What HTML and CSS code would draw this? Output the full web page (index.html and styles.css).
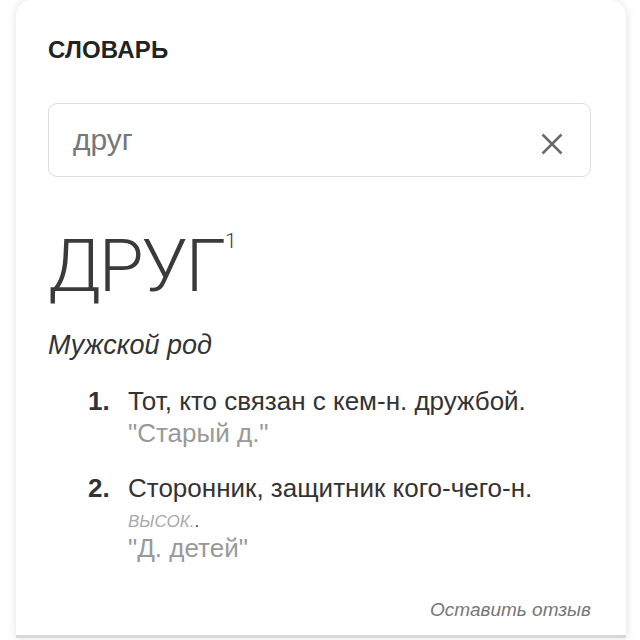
FILE: index.html
```html
<!DOCTYPE html>
<html lang="ru">
<head>
<meta charset="utf-8">
<link rel="stylesheet" href="styles.css">
</head>
<body>
<div class="card">
  <h2 class="title">СЛОВАРЬ</h2>
  <div class="search">
    <span class="query">друг</span>
    <svg class="clear" width="22" height="22" viewBox="0 0 22 22"><path d="M1.5 1.5 L20.5 20.5 M20.5 1.5 L1.5 20.5" stroke="#6b6b6b" stroke-width="2.5" fill="none"/></svg>
  </div>
  <div class="word">ДРУГ<sup class="hom">1</sup></div>
  <div class="pos">Мужской род</div>
  <ol class="defs">
    <li class="def">
      <span class="num">1.</span>
      <div class="body">
        <div class="text">Тот, кто связан с кем-н. дружбой.</div>
        <div class="ex">"Старый д."</div>
      </div>
    </li>
    <li class="def">
      <span class="num">2.</span>
      <div class="body">
        <div class="text">Сторонник, защитник кого-чего-н.</div>
        <div class="label"><span class="lbl">высок.</span>.</div>
        <div class="ex">"Д. детей"</div>
      </div>
    </li>
  </ol>
  <div class="feedback">Оставить отзыв</div>
</div>
</body>
</html>
```

FILE: styles.css
```css
html, body {
  margin: 0;
  padding: 0;
  background: #ffffff;
}
body {
  font-family: "Liberation Sans", Arial, sans-serif;
  width: 640px;
  height: 640px;
  overflow: hidden;
}
.card {
  margin: 0 14px 0 16px;
  height: 638px;
  background: #fff;
  border-radius: 16px 16px 0 0;
  box-shadow: 0 0 10px rgba(0,0,0,0.12);
  border-bottom: 3px solid #d8d8d8;
  padding: 0 35px 0 32px;
  box-sizing: border-box;
  display: flex;
  flex-direction: column;
}
.title {
  margin: 36px 0 0;
  font-size: 24px;
  font-weight: bold;
  color: #222;
  line-height: 28px;
  letter-spacing: 0.2px;
}
.search {
  margin-top: 39px;
  height: 74px;
  border: 1px solid #dcdcdc;
  border-radius: 9px;
  box-sizing: border-box;
  display: flex;
  align-items: center;
  justify-content: space-between;
  padding: 0 27px 0 24px;
}
.query {
  font-size: 30px;
  color: #777;
}
.clear {
  display: block;
  margin-top: 8px;
}
.word {
  margin-top: 44px;
  font-family: Roboto, "Liberation Sans", sans-serif;
  font-weight: 300;
  font-size: 73px;
  line-height: 90px;
  color: #3a3a3a;
  letter-spacing: -2px;
}
.hom {
  font-size: 21px;
  line-height: 20px;
  vertical-align: 43px;
  margin-left: 1px;
  letter-spacing: 0;
}
.pos {
  margin-top: 18px;
  font-style: italic;
  font-size: 27px;
  color: #333;
  line-height: 32px;
}
.defs {
  list-style: none;
  margin: 24px 0 0;
  padding: 0 0 0 40px;
}
.def {
  display: flex;
  font-size: 26px;
  line-height: 32px;
  color: #333;
  margin-bottom: 23px;
}
.num {
  width: 40px;
  flex: none;
  font-weight: bold;
}
.ex {
  color: #999;
}
.label {
  font-size: 17px;
  line-height: 20px;
  padding-top: 8px;
  color: #333;
}
.lbl {
  font-style: italic;
  text-transform: uppercase;
  color: #aaa;
}
.feedback {
  margin-top: auto;
  margin-bottom: 13px;
  align-self: flex-end;
  font-style: italic;
  font-size: 19px;
  line-height: 24px;
  color: #777;
}
```
